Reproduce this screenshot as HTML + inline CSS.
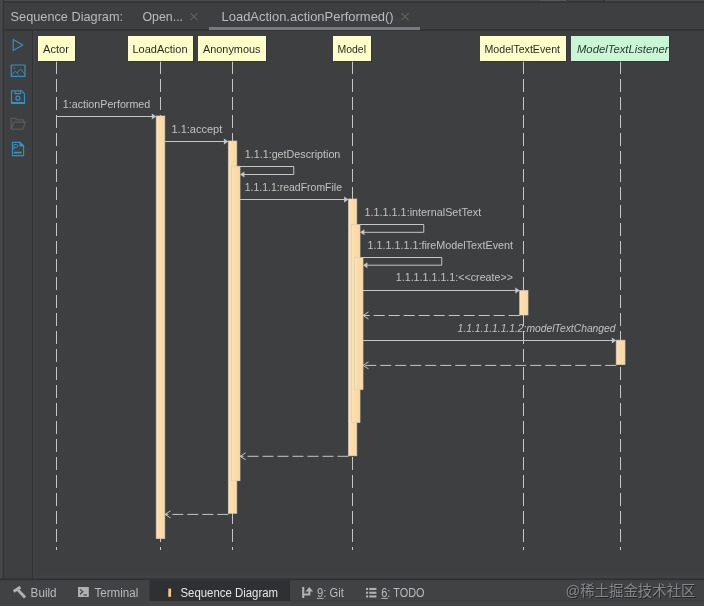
<!DOCTYPE html>
<html><head><meta charset="utf-8"><title>Sequence Diagram</title>
<style>
html,body{margin:0;padding:0;background:#3d3f41;}
body{width:704px;height:606px;overflow:hidden;position:relative;font-family:"Liberation Sans",sans-serif;}
svg{position:absolute;left:0;top:0;filter:blur(0.35px);}
</style></head><body>
<svg width="704" height="606" viewBox="0 0 704 606">
<defs><linearGradient id="bg" x1="0" x2="1" y1="0" y2="0"><stop offset="0" stop-color="#fde3bf"/><stop offset="0.45" stop-color="#fbdba3"/><stop offset="1" stop-color="#fcd8a8"/></linearGradient></defs>
<rect x="0" y="0" width="704" height="606" fill="#3d3f41"/>
<!-- top strip -->
<rect x="0" y="0" width="704" height="1.3" fill="#4b4d4f"/>
<rect x="540" y="0" width="26" height="1.5" fill="#565859"/>
<rect x="566" y="0" width="38" height="1.3" fill="#424446"/>
<rect x="603.5" y="0" width="1.2" height="1.6" fill="#2e3032"/>
<rect x="0" y="1.3" width="704" height="1.4" fill="#2e3032"/>
<!-- left strip -->
<rect x="0" y="0" width="2.8" height="579" fill="#454749"/>
<rect x="2.8" y="0" width="1.3" height="580" fill="#323436"/>
<!-- header -->
<rect x="4.1" y="2.7" width="700" height="26.5" fill="#3d3f41"/>
<rect x="4" y="29.2" width="700" height="1.5" fill="#2f3133"/>
<rect x="209" y="27" width="211" height="3" fill="#757a7e"/>
<text x="10.6" y="21" font-size="12.75" fill="#bbbbbb" font-family='"Liberation Sans", sans-serif' textLength="112.5" lengthAdjust="spacingAndGlyphs">Sequence Diagram:</text>
<text x="142.5" y="21" font-size="12.75" fill="#bbbbbb" font-family='"Liberation Sans", sans-serif' textLength="40.5" lengthAdjust="spacingAndGlyphs">Open...</text>
<text x="221.5" y="21" font-size="12.75" fill="#bbbbbb" font-family='"Liberation Sans", sans-serif' textLength="172.2" lengthAdjust="spacingAndGlyphs">LoadAction.actionPerformed()</text>
<path d="M190.5 13.2 L197.5 20.2 M197.5 13.2 L190.5 20.2" stroke="#606264" stroke-width="1.1" fill="none"/>
<path d="M401.5 13.2 L408.5 20.2 M408.5 13.2 L401.5 20.2" stroke="#606264" stroke-width="1.1" fill="none"/>
<!-- toolbar -->
<rect x="4.1" y="30.7" width="28" height="548" fill="#3d3f41"/>
<rect x="32" y="30.7" width="1.2" height="548" fill="#313335"/>
<rect x="33.2" y="30.7" width="1.8" height="546.5" fill="#424446"/>
<rect x="33.2" y="575.6" width="671" height="1.8" fill="#424446"/>
<!-- icons -->
<g fill="none" stroke="#3590c2" stroke-width="1.2" stroke-linejoin="round">
<path d="M13.2 39.6 L22.8 45 L13.2 50.4 Z"/>
<rect x="11.2" y="65" width="13.8" height="11.4"/>
<path d="M11.5 75 L15.4 71.2 L18.6 74.4 M17 72.8 L20.3 69.2 L24.8 73.8" stroke-width="0.95"/>
<path d="M13 66.6 L15.2 69" stroke-width="0.9"/>
<path d="M11.5 90.8 H21.5 L24.5 93.8 V103.4 H11.5 Z"/>
<path d="M15 91 V93.6 H20.6 V91" stroke-width="1.1"/>
<circle cx="17.9" cy="98.2" r="2" stroke-width="1.2"/>
<path d="M12 102.8 H24" stroke-width="1.6"/>
</g>
<g fill="none" stroke="#585b5e" stroke-width="1.25" stroke-linejoin="round">
<path d="M11.2 129 V118.4 H15.6 L16.8 119.8 H23.6 V122"/>
<path d="M11.2 129 L14 122.2 H25.6 L22.8 129 Z"/>
</g>
<g fill="none" stroke="#3592c4" stroke-width="1.2" stroke-linejoin="round">
<path d="M12.4 142.4 H20 L23.6 146 V155.6 H12.4 Z" stroke-width="1.1"/>
<path d="M20 142.4 V146 H23.6 Z" fill="#3592c4"/>
<path d="M14 149.6 V144.6 H16.3 Q17.8 144.6 17.8 146 Q17.8 147.4 16.3 147.4 H14" stroke-width="1"/>
<path d="M13.6 152.6 H21.6" stroke-width="1.8"/>
</g>
<line x1="56.5" y1="61" x2="56.5" y2="550" stroke="#c6c6c6" stroke-width="1" stroke-dasharray="13 5"/>
<line x1="160.5" y1="61" x2="160.5" y2="550" stroke="#c6c6c6" stroke-width="1" stroke-dasharray="13 5"/>
<line x1="232.5" y1="61" x2="232.5" y2="550" stroke="#c6c6c6" stroke-width="1" stroke-dasharray="13 5"/>
<line x1="352.5" y1="61" x2="352.5" y2="550" stroke="#c6c6c6" stroke-width="1" stroke-dasharray="13 5"/>
<line x1="523.5" y1="61" x2="523.5" y2="550" stroke="#c6c6c6" stroke-width="1" stroke-dasharray="13 5"/>
<line x1="620.5" y1="61" x2="620.5" y2="550" stroke="#c6c6c6" stroke-width="1" stroke-dasharray="13 5"/>
<rect x="39" y="37" width="37" height="25" fill="#2f3133" opacity="0.6"/>
<rect x="38" y="36" width="37" height="25" fill="#fefec9"/>
<text x="43" y="52.5" font-size="10.7" fill="#2b2b2b" font-family='"Liberation Sans", sans-serif' textLength="26" lengthAdjust="spacingAndGlyphs">Actor</text>
<rect x="129" y="37" width="65" height="25" fill="#2f3133" opacity="0.6"/>
<rect x="128" y="36" width="65" height="25" fill="#fefec9"/>
<text x="132.5" y="52.5" font-size="10.7" fill="#2b2b2b" font-family='"Liberation Sans", sans-serif' textLength="55" lengthAdjust="spacingAndGlyphs">LoadAction</text>
<rect x="199" y="37" width="68" height="25" fill="#2f3133" opacity="0.6"/>
<rect x="198" y="36" width="68" height="25" fill="#fefec9"/>
<text x="203" y="52.5" font-size="10.7" fill="#2b2b2b" font-family='"Liberation Sans", sans-serif' textLength="57.5" lengthAdjust="spacingAndGlyphs">Anonymous</text>
<rect x="334" y="37" width="38" height="25" fill="#2f3133" opacity="0.6"/>
<rect x="333" y="36" width="38" height="25" fill="#fefec9"/>
<text x="337.5" y="52.5" font-size="10.7" fill="#2b2b2b" font-family='"Liberation Sans", sans-serif' textLength="28.5" lengthAdjust="spacingAndGlyphs">Model</text>
<rect x="481" y="37" width="86" height="25" fill="#2f3133" opacity="0.6"/>
<rect x="480" y="36" width="86" height="25" fill="#fefec9"/>
<text x="484.5" y="52.5" font-size="10.7" fill="#2b2b2b" font-family='"Liberation Sans", sans-serif' textLength="75.5" lengthAdjust="spacingAndGlyphs">ModelTextEvent</text>
<rect x="572" y="37" width="98" height="25" fill="#2f3133" opacity="0.6"/>
<rect x="571" y="36" width="98" height="25" fill="#c9f6d4"/>
<clipPath id="cb5"><rect x="571" y="36" width="98" height="25"/></clipPath>
<text x="577" y="52.5" font-size="10.7" fill="#2a3a30" font-family='"Liberation Sans", sans-serif' font-style="italic" textLength="91.5" lengthAdjust="spacingAndGlyphs" clip-path="url(#cb5)">ModelTextListener</text>
<rect x="156.2" y="116" width="8.600000000000023" height="422.6" fill="url(#bg)" stroke="#d8cdb8" stroke-width="0.7"/>
<rect x="228.3" y="141" width="8.5" height="372.29999999999995" fill="url(#bg)" stroke="#d8cdb8" stroke-width="0.7"/>
<rect x="231.6" y="166.2" width="8.400000000000006" height="314.5" fill="url(#bg)" stroke="#d8cdb8" stroke-width="0.7"/>
<rect x="348.5" y="199" width="8.300000000000011" height="256.8" fill="url(#bg)" stroke="#d8cdb8" stroke-width="0.7"/>
<rect x="351.5" y="224.5" width="8.5" height="198.0" fill="url(#bg)" stroke="#d8cdb8" stroke-width="0.7"/>
<rect x="354.5" y="257.5" width="8.5" height="132.0" fill="url(#bg)" stroke="#d8cdb8" stroke-width="0.7"/>
<rect x="519.7" y="290.5" width="8.299999999999955" height="24.5" fill="url(#bg)" stroke="#d8cdb8" stroke-width="0.7"/>
<rect x="616.2" y="340.2" width="8.799999999999955" height="24.400000000000034" fill="url(#bg)" stroke="#d8cdb8" stroke-width="0.7"/>
<line x1="57" y1="116.5" x2="153" y2="116.5" stroke="#c6c6c6" stroke-width="1"/>
<polygon points="156.2,116.5 151.79999999999998,113.5 151.79999999999998,119.5" fill="#c6c6c6"/>
<text x="62.75" y="107.5" font-size="10.7" fill="#c2c2c2" font-family='"Liberation Sans", sans-serif' textLength="87.5" lengthAdjust="spacingAndGlyphs">1:actionPerformed</text>
<line x1="165" y1="141.5" x2="225" y2="141.5" stroke="#c6c6c6" stroke-width="1"/>
<polygon points="228.3,141.5 223.9,138.5 223.9,144.5" fill="#c6c6c6"/>
<text x="171.5" y="133" font-size="10.7" fill="#c2c2c2" font-family='"Liberation Sans", sans-serif' textLength="50.75" lengthAdjust="spacingAndGlyphs">1.1:accept</text>
<polyline points="240,166.5 293.75,166.5 293.75,174.5 243,174.5" fill="none" stroke="#c6c6c6" stroke-width="1"/>
<polygon points="240,174.5 244.4,171.5 244.4,177.5" fill="#c6c6c6"/>
<text x="244.75" y="158" font-size="10.7" fill="#c2c2c2" font-family='"Liberation Sans", sans-serif' textLength="95.6" lengthAdjust="spacingAndGlyphs">1.1.1:getDescription</text>
<line x1="240" y1="199.5" x2="345" y2="199.5" stroke="#c6c6c6" stroke-width="1"/>
<polygon points="348.5,199.5 344.1,196.5 344.1,202.5" fill="#c6c6c6"/>
<text x="244.75" y="190.6" font-size="10.7" fill="#c2c2c2" font-family='"Liberation Sans", sans-serif' textLength="97.25" lengthAdjust="spacingAndGlyphs">1.1.1.1:readFromFile</text>
<polyline points="360,224.5 423.75,224.5 423.75,232.3 363,232.3" fill="none" stroke="#c6c6c6" stroke-width="1"/>
<polygon points="360,232.3 364.4,229.3 364.4,235.3" fill="#c6c6c6"/>
<text x="364.5" y="215.5" font-size="10.7" fill="#c2c2c2" font-family='"Liberation Sans", sans-serif' textLength="116.75" lengthAdjust="spacingAndGlyphs">1.1.1.1.1:internalSetText</text>
<polyline points="363,257.5 441.75,257.5 441.75,265.2 366,265.2" fill="none" stroke="#c6c6c6" stroke-width="1"/>
<polygon points="363,265.2 367.4,262.2 367.4,268.2" fill="#c6c6c6"/>
<text x="367.5" y="248.7" font-size="10.7" fill="#c2c2c2" font-family='"Liberation Sans", sans-serif' textLength="145.5" lengthAdjust="spacingAndGlyphs">1.1.1.1.1.1:fireModelTextEvent</text>
<line x1="363" y1="290.5" x2="516" y2="290.5" stroke="#c6c6c6" stroke-width="1"/>
<polygon points="519.7,290.5 515.3000000000001,287.5 515.3000000000001,293.5" fill="#c6c6c6"/>
<text x="395.75" y="281.4" font-size="10.7" fill="#c2c2c2" font-family='"Liberation Sans", sans-serif' textLength="117.25" lengthAdjust="spacingAndGlyphs">1.1.1.1.1.1.1:&lt;&lt;create&gt;&gt;</text>
<line x1="519.7" y1="315.5" x2="363" y2="315.5" stroke="#c6c6c6" stroke-width="1" stroke-dasharray="11 4"/>
<polyline points="368.5,312.0 363,315.5 368.5,319.0" fill="none" stroke="#c6c6c6" stroke-width="1"/>
<line x1="363" y1="340.5" x2="612.5" y2="340.5" stroke="#c6c6c6" stroke-width="1"/>
<polygon points="616.2,340.5 611.8000000000001,337.5 611.8000000000001,343.5" fill="#c6c6c6"/>
<text x="457.6" y="331.7" font-size="10.7" fill="#c2c2c2" font-family='"Liberation Sans", sans-serif' font-style="italic" textLength="158" lengthAdjust="spacingAndGlyphs">1.1.1.1.1.1.1.2:modelTextChanged</text>
<line x1="616.2" y1="365.4" x2="363" y2="365.4" stroke="#c6c6c6" stroke-width="1" stroke-dasharray="11 4"/>
<polyline points="368.5,361.9 363,365.4 368.5,368.9" fill="none" stroke="#c6c6c6" stroke-width="1"/>
<line x1="348.5" y1="456.3" x2="240.2" y2="456.3" stroke="#c6c6c6" stroke-width="1" stroke-dasharray="11 4"/>
<polyline points="245.7,452.8 240.2,456.3 245.7,459.8" fill="none" stroke="#c6c6c6" stroke-width="1"/>
<line x1="228.3" y1="514.4" x2="165" y2="514.4" stroke="#c6c6c6" stroke-width="1" stroke-dasharray="11 4"/>
<polyline points="170.5,510.9 165,514.4 170.5,517.9" fill="none" stroke="#c6c6c6" stroke-width="1"/>
<!-- bottom bar -->
<rect x="0" y="578.6" width="704" height="1.7" fill="#2f3133"/>
<rect x="0" y="580.3" width="704" height="20.7" fill="#404244"/>
<rect x="149.5" y="580.3" width="140.5" height="20.9" fill="#2e3032"/>
<rect x="290" y="600.3" width="414" height="1" fill="#3b3d3f"/>
<rect x="0" y="601.3" width="704" height="5" fill="#414345"/>
<rect x="149.5" y="601.3" width="140.5" height="5" fill="#454749"/>

<!-- build icon (hammer) -->
<g fill="#afb1b3">
<path d="M12.8 590.2 L19.6 585.8 L21.2 588.4 L14.4 592.8 Z"/>
<path d="M16.6 590.6 L18.8 588.8 L26.2 596.4 L24 598.4 Z"/>
</g>
<text x="30.6" y="596.5" font-size="12.3" fill="#bbbbbb" font-family='"Liberation Sans", sans-serif' textLength="26" lengthAdjust="spacingAndGlyphs">Build</text>
<!-- terminal icon -->
<rect x="78" y="587" width="10.8" height="10" fill="#afb1b3"/>
<path d="M80 589.4 L82.8 591.8 L80 594.2" fill="none" stroke="#3c3f41" stroke-width="1.2"/>
<path d="M83.4 595 H87" stroke="#3c3f41" stroke-width="1.1"/>
<text x="94.5" y="596.5" font-size="12.3" fill="#bbbbbb" font-family='"Liberation Sans", sans-serif' textLength="43.75" lengthAdjust="spacingAndGlyphs">Terminal</text>
<!-- seq icon -->
<rect x="168.3" y="588.6" width="2.8" height="8.2" fill="#f3c98b"/>
<path d="M165 590.4 H168.2 M171.2 593.4 H174" stroke="#232425" stroke-width="1"/>
<text x="180.5" y="596.5" font-size="12.3" fill="#e6e6e6" font-family='"Liberation Sans", sans-serif' textLength="97.5" lengthAdjust="spacingAndGlyphs">Sequence Diagram</text>
<!-- git icon -->
<g fill="none" stroke="#afb1b3" stroke-width="2.1">
<path d="M303.2 587 V598"/>
<path d="M303.2 594.5 H309.3 V590.5"/>
</g>
<path d="M305.4 591.6 L309.3 586.9 L313.2 591.6 Z" fill="#afb1b3"/>
<text x="317" y="596.5" font-size="12.3" fill="#bbbbbb" font-family='"Liberation Sans", sans-serif' textLength="26.75" lengthAdjust="spacingAndGlyphs">9: Git</text>
<path d="M317 598.4 H323.6" stroke="#bbbbbb" stroke-width="0.9"/>
<!-- todo icon -->
<g fill="#afb1b3">
<rect x="366" y="587.9" width="2.1" height="2.1"/><rect x="369.3" y="587.9" width="7.1" height="2.1"/>
<rect x="366" y="591.7" width="2.1" height="2.1"/><rect x="369.3" y="591.7" width="7.1" height="2.1"/>
<rect x="366" y="595.4" width="2.1" height="2.1"/><rect x="369.3" y="595.4" width="7.1" height="2.1"/>
</g>
<text x="381.3" y="596.5" font-size="12.3" fill="#bbbbbb" font-family='"Liberation Sans", sans-serif' textLength="43.2" lengthAdjust="spacingAndGlyphs">6: TODO</text>
<path d="M381.3 598.4 H387.8" stroke="#bbbbbb" stroke-width="0.9"/>
<!-- watermark -->
<text x="566.5" y="597" font-size="14.5" font-family='"Liberation Sans", "Noto Sans CJK SC", sans-serif' fill="#1f2021" opacity="0.8" textLength="130" lengthAdjust="spacingAndGlyphs">@稀土掘金技术社区</text>
<text x="565.5" y="596" font-size="14.5" font-family='"Liberation Sans", "Noto Sans CJK SC", sans-serif' fill="#85878a" textLength="130" lengthAdjust="spacingAndGlyphs">@稀土掘金技术社区</text>
</svg>
</body></html>
